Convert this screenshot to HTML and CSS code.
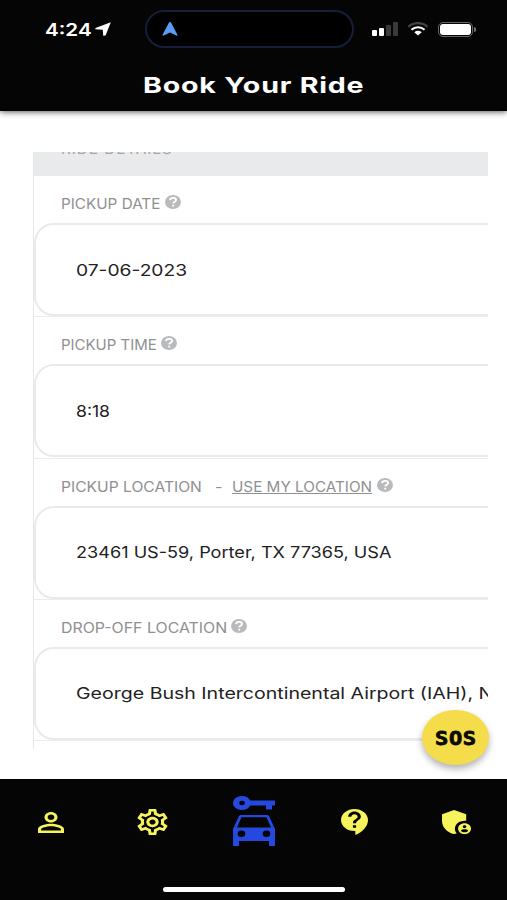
FILE: index.html
```html
<!DOCTYPE html>
<html lang="en">
<head>
    <meta charset="UTF-8">
    <meta name="viewport" content="width=device-width, initial-scale=1.0">
    <title>Book Your Ride</title>
    <link rel="stylesheet" href="styles.css">
</head>
<body>
    <svg class="sprite" aria-hidden="true">
        <symbol id="help" viewBox="0 0 16 14" preserveAspectRatio="none">
            <ellipse cx="8" cy="7" rx="8" ry="7" fill="#b9babc"/>
            <path d="M5 5.200C5.200 3.500 6.500 2.900 8.100 2.900c1.800 0 3 .8 3 2.100 0 1.800-2.700 1.600-2.900 3.400M8.200 9.700v1.700" fill="none" stroke="#fff" stroke-width="1.900"/>
        </symbol>
    </svg>
    <div class="screen">
        <header class="header">
            <div class="status">
                <span class="time">4:24</span>
                <svg class="location" viewBox="0 0 16 14" preserveAspectRatio="none"><path d="M15.800.2 10.600 13.600 8.200 13.800 7.800 7.700.300 7.200.500 5.900z" fill="#fff"/></svg>
                <div class="island">
                    <svg width="16" height="14" viewBox="0 0 16 14"><path d="M8 0c.6 0 1 .5 1.300 1l6 11.500c.4 1-.2 1.500-1.100 1.100L8 10.500l-6.200 3.100C.9 14 .3 13.500.7 12.500L6.700 1C7 .5 7.400 0 8 0z" fill="#5a9cf4"/></svg>
                </div>
                <div class="signal"><i></i><i></i><i class="off"></i><i class="off"></i></div>
                <svg class="wifi" viewBox="0 0 22 14" preserveAspectRatio="none" fill="none">
                    <path d="M1.200 4.700C6.500-.2 15.500-.2 20.800 4.700" stroke="#444" stroke-width="2.200"/>
                    <path d="M4.500 7.700c3.700-3.300 9.300-3.300 13 0" stroke="#fff" stroke-width="2.200"/>
                    <path d="M7.300 10.200c2.200-1.800 5.200-1.800 7.400 0L11 13.600z" fill="#fff"/>
                </svg>
                <div class="battery"><div class="level"></div></div>
            </div>
            <h1 class="title">Book Your Ride</h1>
        </header>

        <main class="content">
            <div class="form">
                <div class="section"><span>RIDE DETAILS</span></div>
                <div class="field">
                    <div class="label"><span class="date-label">PICKUP DATE</span><svg class="help"><use href="#help"/></svg></div>
                    <div class="input"><span class="date-value">07-06-2023</span></div>
                </div>
                <div class="field">
                    <div class="label"><span class="time-label">PICKUP TIME</span><svg class="help"><use href="#help"/></svg></div>
                    <div class="input"><span class="time-value">8:18</span></div>
                </div>
                <div class="field">
                    <div class="label"><span class="pickup-label">PICKUP LOCATION</span><span class="dash">-</span><a class="use-location">USE MY LOCATION</a><svg class="help"><use href="#help"/></svg></div>
                    <div class="input"><span class="pickup-value">23461 US-59, Porter, TX 77365, USA</span></div>
                </div>
                <div class="field">
                    <div class="label"><span class="drop-label">DROP-OFF LOCATION</span><svg class="help"><use href="#help"/></svg></div>
                    <div class="input"><span class="drop-value">George Bush Intercontinental Airport (IAH), N</span></div>
                </div>
            </div>
            <button class="sos"><span>SOS</span></button>
        </main>

        <nav class="nav">
            <a class="item"><svg class="person" viewBox="4 4 16 16" preserveAspectRatio="none"><path d="M12 5.9c1.16 0 2.1.94 2.1 2.1s-.94 2.1-2.1 2.1S9.9 9.16 9.9 8s.94-2.1 2.1-2.1m0 9c2.97 0 6.1 1.46 6.1 2.1v1.1H5.9V17c0-.64 3.13-2.1 6.1-2.1M12 4C9.79 4 8 5.79 8 8s1.79 4 4 4 4-1.79 4-4-1.79-4-4-4zm0 9c-2.67 0-8 1.34-8 4v3h16v-3c0-2.66-5.33-4-8-4z"/></svg></a>
            <a class="item"><svg class="gear" viewBox="2 2 20 20" preserveAspectRatio="none"><path d="M19.43 12.98c.04-.32.07-.64.07-.98 0-.34-.03-.66-.07-.98l2.11-1.65c.19-.15.24-.42.12-.64l-2-3.46c-.09-.16-.26-.25-.44-.25-.06 0-.12.01-.17.03l-2.49 1c-.52-.4-1.08-.73-1.69-.98l-.38-2.65C14.46 2.18 14.25 2 14 2h-4c-.25 0-.46.18-.49.42l-.38 2.65c-.61.25-1.17.59-1.69.98l-2.49-1c-.06-.02-.12-.03-.18-.03-.17 0-.34.09-.43.25l-2 3.46c-.13.22-.07.49.12.64l2.11 1.65c-.04.32-.07.65-.07.98 0 .33.03.66.07.98l-2.11 1.65c-.19.15-.24.42-.12.64l2 3.46c.09.16.26.25.44.25.06 0 .12-.01.17-.03l2.49-1c.52.4 1.08.73 1.69.98l.38 2.65c.03.24.24.42.49.42h4c.25 0 .46-.18.49-.42l.38-2.65c.61-.25 1.17-.59 1.69-.98l2.49 1c.06.02.12.03.18.03.17 0 .34-.09.43-.25l2-3.46c.12-.22.07-.49-.12-.64l-2.11-1.65zm-1.98-1.71c.04.31.05.52.05.73 0 .21-.02.43-.05.73l-.14 1.13.89.7 1.08.84-.7 1.21-1.27-.51-1.04-.42-.9.68c-.43.32-.84.56-1.25.73l-1.06.43-.16 1.13-.2 1.35h-1.4l-.19-1.35-.16-1.13-1.06-.43c-.43-.18-.83-.41-1.23-.71l-.91-.7-1.06.43-1.27.51-.7-1.21 1.08-.84.89-.7-.14-1.13c-.03-.31-.05-.54-.05-.74s.02-.43.05-.73l.14-1.13-.89-.7-1.08-.84.7-1.21 1.27.51 1.04.42.9-.68c.43-.32.84-.56 1.25-.73l1.06-.43.16-1.13.2-1.35h1.39l.19 1.35.16 1.13 1.06.43c.43.18.83.41 1.23.71l.91.7 1.06-.43 1.27-.51.7 1.21-1.07.85-.89.7.14 1.13zM12 8c-2.21 0-4 1.79-4 4s1.79 4 4 4 4-1.79 4-4-1.79-4-4-4zm0 6c-1.1 0-2-.9-2-2s.9-2 2-2 2 .9 2 2-.9 2-2 2z"/></svg></a>
            <a class="item active"><svg class="car" viewBox="0 0 42 52" fill-rule="evenodd"><path d="M9 1c4 0 7 2 8.300 4.500H42v5h-3V14.500h-6v-4H17.300C16 13 13 15 9 15 4 15 0 12 0 8s4-7 9-7zm0 4.800a2.800 2.200 0 1 0 0 4.400 2.800 2.200 0 1 0 0-4.400zM8.500 20h25c1.500 0 2.500.6 3 2L42 34v17h-6v-5H6v5H0V34l5.500-12c.5-1.400 1.500-2 3-2zM8.500 22.200 4 32.500h34L33.500 22.200zM8.500 35.500a3.800 3.300 0 1 0 0 6.600 3.800 3.300 0 1 0 0-6.600zm25 0a3.800 3.300 0 1 0 0 6.600 3.800 3.300 0 1 0 0-6.600z"/></svg></a>
            <a class="item"><svg class="support" viewBox="3 2 17 20" preserveAspectRatio="none"><path d="M11.5 2C6.81 2 3 5.81 3 10.5S6.81 19 11.5 19h.5v3c4.86-2.34 8-7 8-11.5C20 5.81 16.19 2 11.5 2zm1 14.5h-2v-2h2v2zm0-3.5h-2c0-3.25 3-3 3-5 0-1.1-.9-2-2-2s-2 .9-2 2h-2c0-2.21 1.79-4 4-4s4 1.79 4 4c0 2.5-3 2.75-3 5z"/></svg></a>
            <a class="item"><svg class="shield" viewBox="3 3 18 18" preserveAspectRatio="none"><path d="M17 11c.34 0 .67.04 1 .09V6.27L10.5 3 3 6.27v4.91c0 4.54 3.2 8.79 7.5 9.82.55-.13 1.08-.32 1.6-.55-.69-.98-1.1-2.17-1.1-3.45 0-3.31 2.69-6 6-6z"/><path d="M17 13c-2.21 0-4 1.79-4 4s1.79 4 4 4 4-1.79 4-4-1.79-4-4-4zm0 1.38c.62 0 1.12.51 1.12 1.12s-.51 1.12-1.12 1.12-1.12-.51-1.12-1.12.5-1.12 1.12-1.12zm0 5.37c-.93 0-1.74-.46-2.24-1.17.05-.72 1.51-1.08 2.24-1.08s2.19.36 2.24 1.08c-.5.71-1.31 1.17-2.24 1.17z"/></svg></a>
            <div class="home-bar"></div>
        </nav>
    </div>
</body>
</html>
```
FILE: styles.css
```css
body, html {
    margin: 0;
    padding: 0;
    height: 100%;
    font-family: Inter, Arial, sans-serif;
    background-color: #fff;
}

.sprite {
    display: none;
}

.screen {
    display: flex;
    flex-direction: column;
    width: 507px;
    height: 900px;
    overflow: hidden;
}

.header {
    height: 111px;
    flex-shrink: 0;
    background-color: #050505;
    color: #fff;
    box-shadow: 0 1px 6px rgba(0, 0, 0, 0.65);
}

.status {
    display: flex;
    align-items: center;
    height: 58px;
    padding-left: 45px;
}

.time {
    width: 50px;
    font-size: 17.5px;
    font-weight: 600;
    transform: scaleX(1.18);
    transform-origin: left;
    white-space: nowrap;
}

.location {
    width: 16px;
    height: 14px;
    margin-right: 34px;
}

.island {
    display: flex;
    align-items: center;
    width: 209px;
    height: 38px;
    padding-left: 15px;
    border: 2px solid #161e3c;
    border-radius: 20px;
    background-color: #000;
    box-sizing: border-box;
}

.signal {
    display: flex;
    align-items: flex-end;
    gap: 2px;
    width: 27px;
    height: 14px;
    margin-left: 18px;
}

.signal i {
    width: 5px;
    height: 6px;
    border-radius: 1px;
    background-color: #fff;
}

.signal i:nth-child(2) {
    height: 8px;
}

.signal i.off {
    height: 11px;
    background-color: #3a3a3a;
}

.signal i:last-child {
    height: 14px;
}

.wifi {
    width: 22px;
    height: 14px;
    margin-left: 8px;
}

.battery {
    position: relative;
    width: 35px;
    height: 15px;
    margin-left: 9px;
    padding: 1px;
    border: 1px solid #666;
    border-radius: 5px;
    box-sizing: border-box;
}

.battery::after {
    content: "";
    position: absolute;
    right: -4px;
    top: 4px;
    width: 2px;
    height: 5px;
    border-radius: 0 2px 2px 0;
    background-color: #777;
}

.level {
    height: 100%;
    border-radius: 3px;
    background-color: #fff;
}

.title {
    width: 180px;
    margin: 12px 0 0 143px;
    font-size: 22px;
    line-height: 30px;
    font-weight: 700;
    letter-spacing: 0.6px;
    transform: scaleX(1.3);
    transform-origin: left;
    white-space: nowrap;
}

.content {
    position: relative;
    flex: 1;
    padding: 41px 19px 30px 33px;
}

.form {
    height: 597px;
    overflow: hidden;
    border-left: 1px solid #e6e7e9;
    box-sizing: border-box;
}

.section {
    height: 24px;
    padding-left: 27px;
    overflow: hidden;
    background-color: #e9eaec;
    color: #a4a5a8;
    font-size: 14px;
    line-height: 17px;
}

.section span {
    display: block;
    width: 110px;
    margin-top: -12px;
    letter-spacing: 0.8px;
    transform: scaleX(1.1);
    transform-origin: left;
}

.field {
    height: 141.3px;
    border-bottom: 1px solid #ececee;
    box-sizing: border-box;
}

.label {
    display: flex;
    align-items: center;
    height: 47px;
    padding: 8px 0 0 27px;
    color: #8f9092;
    font-size: 14px;
    white-space: nowrap;
    box-sizing: border-box;
}

.label span,
.label a,
.input span {
    transform-origin: left;
}

.date-label {
    width: 99px;
    transform: scaleX(1.09);
}

.time-label {
    width: 95px;
    transform: scaleX(1.07);
}

.pickup-label {
    width: 140px;
    transform: scaleX(1.115);
}

.drop-label {
    width: 165px;
    transform: scaleX(1.135);
}

.help {
    width: 16px;
    height: 14px;
    margin: -3px 0 0 5px;
}

.dash {
    width: 7px;
    margin: 0 10px 0 14px;
    transform: scaleX(1.15);
}

.use-location {
    width: 140px;
    text-decoration: underline;
    transform: scaleX(1.09);
}

.input {
    display: flex;
    align-items: center;
    width: 520px;
    height: 93px;
    padding-left: 40px;
    border: 2px solid #e9eaeb;
    border-radius: 20px;
    color: #222;
    font-size: 16px;
    white-space: nowrap;
    box-sizing: border-box;
}

.date-value {
    transform: scaleX(1.2);
}

.time-value {
    transform: scaleX(1.1);
}

.pickup-value {
    transform: scaleX(1.132);
}

.drop-value {
    transform: scaleX(1.222);
}

.sos {
    position: absolute;
    left: 422px;
    top: 599px;
    width: 67px;
    height: 55px;
    padding: 0;
    border: none;
    border-radius: 50%;
    background-color: #f5dc4b;
    box-shadow: 0 4px 7px rgba(0, 0, 0, 0.3);
    color: #0b0a05;
    font-family: "DejaVu Sans Mono", Inter, monospace;
    font-size: 20px;
    font-weight: 700;
}

.sos span {
    display: inline-block;
    letter-spacing: 0.5px;
    transform: scaleX(1.1);
    -webkit-text-stroke: 0.8px #0b0a05;
}

.nav {
    position: relative;
    display: flex;
    height: 121px;
    flex-shrink: 0;
    background-color: #050505;
}

.item {
    display: flex;
    flex: 1;
    justify-content: center;
    align-items: center;
    height: 86px;
    fill: #f7f35c;
}

.item.active {
    height: 84px;
    fill: #2549df;
}

.person {
    width: 26px;
    height: 21px;
}

.gear {
    width: 31px;
    height: 26px;
}

.car {
    width: 42px;
    height: 52px;
}

.support {
    width: 27px;
    height: 26px;
}

.shield {
    width: 29px;
    height: 24px;
}

.home-bar {
    position: absolute;
    left: 163px;
    bottom: 8px;
    width: 182px;
    height: 5px;
    border-radius: 3px;
    background-color: #fff;
}
```
